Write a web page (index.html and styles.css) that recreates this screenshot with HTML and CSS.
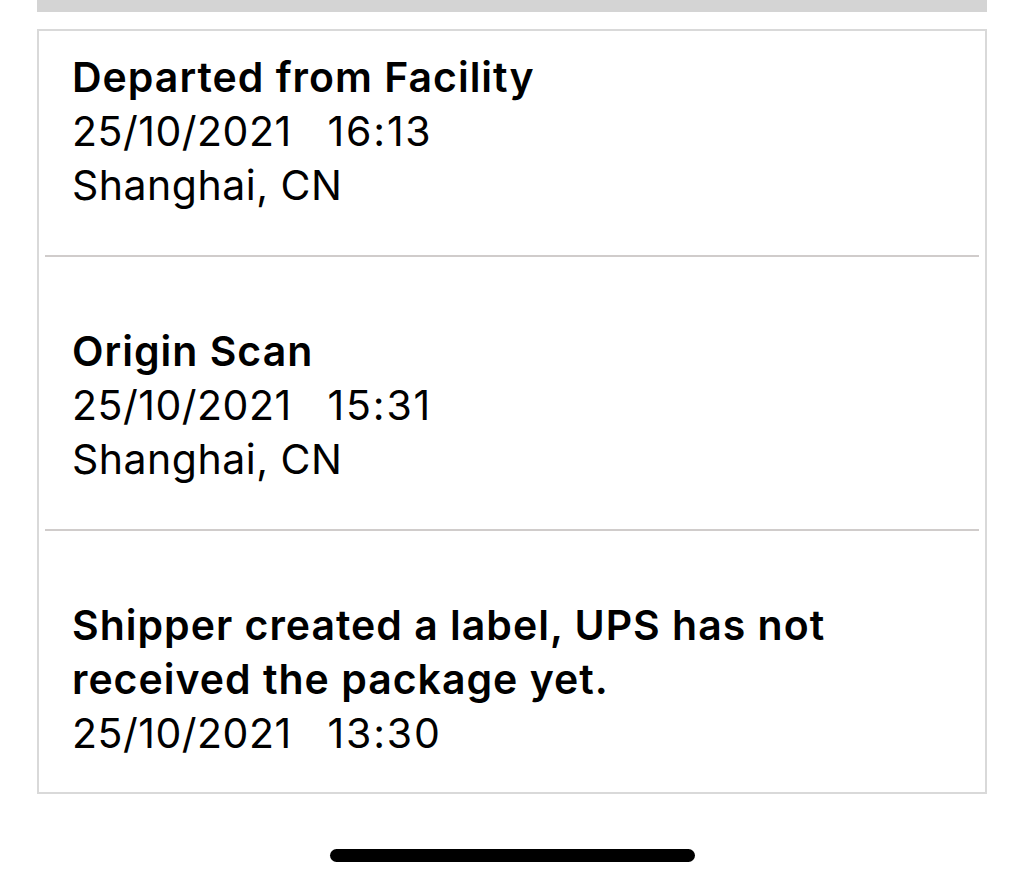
FILE: index.html
```html
<!DOCTYPE html>
<html>
<head>
<meta charset="utf-8">
<link rel="stylesheet" href="styles.css">
</head>
<body>
<div class="page">
  <div class="topbar"></div>
  <div class="card">
    <div class="row first">
      <div class="title">Departed from Facility</div>
      <div class="line"><span>25/10/2021</span><span class="time">16:13</span></div>
      <div class="line">Shanghai, CN</div>
    </div>
    <div class="divider"></div>
    <div class="row">
      <div class="title">Origin Scan</div>
      <div class="line"><span>25/10/2021</span><span class="time">15:31</span></div>
      <div class="line">Shanghai, CN</div>
    </div>
    <div class="divider"></div>
    <div class="row last">
      <div class="title">Shipper created a label, UPS has not<br>received the package yet.</div>
      <div class="line"><span>25/10/2021</span><span class="time">13:30</span></div>
    </div>
  </div>
  <div class="home"></div>
</div>
</body>
</html>
```
FILE: styles.css
```css
html, body {
  margin: 0;
  padding: 0;
  background: #ffffff;
}
.page {
  width: 1024px;
  height: 884px;
  display: flex;
  flex-direction: column;
  align-items: center;
  font-family: Inter, "Liberation Sans", sans-serif;
  color: #000;
}
.topbar {
  width: 950px;
  height: 12px;
  background: #d4d4d4;
}
.card {
  box-sizing: border-box;
  width: 950px;
  margin-top: 17px;
  border: 2px solid #d9d9d9;
  display: flex;
  flex-direction: column;
}
.row {
  padding: 67px 33px 43px 33px;
  font-size: 41px;
  line-height: 54px;
  letter-spacing: 0.5px;
}
.row.first {
  padding-top: 19px;
}
.row.last {
  padding-bottom: 32px;
}
.title {
  font-weight: 600;
  letter-spacing: 1px;
}
.line {
  display: flex;
  gap: 36px;
}
.time {
  letter-spacing: 1.8px;
}
.divider {
  height: 2px;
  margin: 0 6px;
  background: #d0cccb;
}
.home {
  margin-top: 55px;
  width: 365px;
  height: 13px;
  border-radius: 7px;
  background: #000;
}
```
